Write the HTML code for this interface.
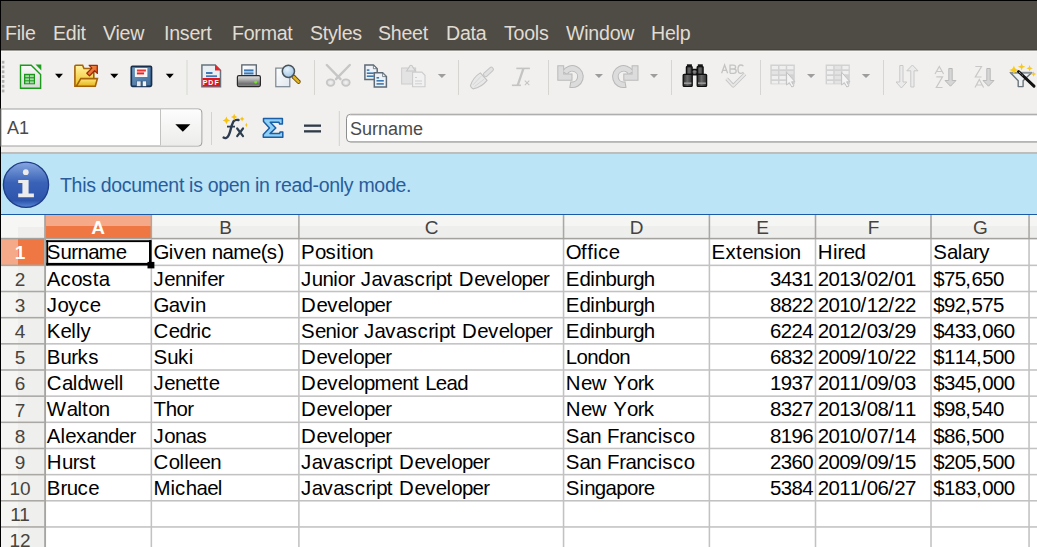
<!DOCTYPE html>
<html><head><meta charset="utf-8">
<style>
*{box-sizing:border-box;margin:0;padding:0}
html,body{width:1037px;height:547px;overflow:hidden;background:#000;font-family:"Liberation Sans",sans-serif}
.abs{position:absolute}
#menubar{position:absolute;left:1px;top:1px;width:1036px;height:50px;background:linear-gradient(#4f4c46 0,#4f4c46 48px,#46433d 48px,#46433d 49px,#9e9c97 49px)}
.mi{position:absolute;top:20.1px;font-size:19.6px;letter-spacing:-0.25px;color:#e0dcd3;white-space:pre;line-height:24px}
#tb{position:absolute;left:1px;top:51px;width:1036px;height:102px;background:linear-gradient(#f6f5f3 0,#f6f5f3 1px,#f1f0ee 1px)}
#info{position:absolute;left:1px;top:153px;width:1036px;height:62px;background:#bbe4f6;border-bottom:1px solid #1a5aa6}
#grid{position:absolute;left:0;top:0;width:1037px;height:547px}
.hl{position:absolute;height:1px;background:#cdcdcd}
.vl{position:absolute;width:1px;background:#cdcdcd}
.ch{position:absolute;top:0;height:24px;font-size:19px;color:#46433e;text-align:center;line-height:24px}
.rh{position:absolute;left:0;width:43px;font-size:19px;color:#46433e;text-align:center}
.c{position:absolute;font-size:20.43px;color:#000;white-space:pre;line-height:24px}
.c i{display:inline-block;font-style:normal}
.r{text-align:right}
.n{font-size:20px;letter-spacing:-0.1px}
.sep{position:absolute;width:1px;background:#d3d2cf}
.dd{position:absolute;width:0;height:0;border-left:4px solid transparent;border-right:4px solid transparent;border-top:4px solid #000}
.ddg{border-top-color:#9a9a9a}
</style></head><body>
<div id="menubar">
<span class="mi" style="left:4px">File</span>
<span class="mi" style="left:52px">Edit</span>
<span class="mi" style="left:102px">View</span>
<span class="mi" style="left:163px">Insert</span>
<span class="mi" style="left:231px">Format</span>
<span class="mi" style="left:309px">Styles</span>
<span class="mi" style="left:377px">Sheet</span>
<span class="mi" style="left:445px">Data</span>
<span class="mi" style="left:503px">Tools</span>
<span class="mi" style="left:565px">Window</span>
<span class="mi" style="left:650px">Help</span>
</div>
<div id="tb"></div>

<div id="info">
 <span class="abs" style="left:59px;top:21px;font-size:19.5px;letter-spacing:-0.3px;color:#2a5c9c;white-space:pre">This document is open in read-only mode.</span>
</div>
<!--TB-->
<svg class="abs" style="left:0;top:0" width="1037" height="215" viewBox="0 0 1037 215">
<defs>
 <linearGradient id="gdoc" x1="0" y1="0" x2="0" y2="1"><stop offset="0" stop-color="#fafafa"/><stop offset="1" stop-color="#d9d9d9"/></linearGradient>
 <linearGradient id="gfold" x1="0" y1="0" x2="0" y2="1"><stop offset="0" stop-color="#fff3a0"/><stop offset="1" stop-color="#f0c020"/></linearGradient>
 <linearGradient id="gfront" x1="0" y1="0" x2="0" y2="1"><stop offset="0" stop-color="#fde77a"/><stop offset="1" stop-color="#e6b31a"/></linearGradient>
 <linearGradient id="garrow" x1="0" y1="0" x2="1" y2="1"><stop offset="0" stop-color="#f7a25a"/><stop offset="1" stop-color="#e0501a"/></linearGradient>
 <linearGradient id="gsave" x1="0" y1="0" x2="1" y2="1"><stop offset="0" stop-color="#6f98c0"/><stop offset="1" stop-color="#3f6c9a"/></linearGradient>
 <linearGradient id="gprn" x1="0" y1="0" x2="0" y2="1"><stop offset="0" stop-color="#e6e6e6"/><stop offset="0.35" stop-color="#b4b4b4"/><stop offset="0.75" stop-color="#707070"/><stop offset="1" stop-color="#8a8a8a"/></linearGradient>
 <linearGradient id="gpage" x1="0" y1="0" x2="1" y2="1"><stop offset="0" stop-color="#ffffff"/><stop offset="1" stop-color="#dfe6ee"/></linearGradient>
 <radialGradient id="glens" cx="0.4" cy="0.35" r="0.7"><stop offset="0" stop-color="#e6f2fb"/><stop offset="1" stop-color="#9cc3e6"/></radialGradient>
 <linearGradient id="gbtn" x1="0" y1="0" x2="0" y2="1"><stop offset="0" stop-color="#fdfdfd"/><stop offset="1" stop-color="#ececeb"/></linearGradient>
 <linearGradient id="ginfo" x1="0" y1="0" x2="0" y2="1"><stop offset="0" stop-color="#86a6e0"/><stop offset="0.45" stop-color="#3a63b8"/><stop offset="0.85" stop-color="#2c55ab"/><stop offset="1" stop-color="#5a88d8"/></linearGradient>
</defs>
<!-- grip -->
<g fill="#b0afac"><rect x="1.8" y="60.8" width="2.6" height="2.8"/><rect x="1.8" y="65.6" width="2.6" height="2.8"/><rect x="1.8" y="70.4" width="2.6" height="2.8"/><rect x="1.8" y="75.2" width="2.6" height="2.8"/><rect x="1.8" y="80.0" width="2.6" height="2.8"/><rect x="1.8" y="84.8" width="2.6" height="2.8"/><rect x="1.8" y="89.6" width="2.6" height="2.8"/></g>
<!-- new spreadsheet -->
<path d="M20.5 65.2 H31.2 L40.6 74.6 V88.2 H20.5 Z" fill="url(#gdoc)" stroke="#1c9a1c" stroke-width="1.4"/>
<path d="M35.5 64.5 H41.3 V70.5 Z" fill="#1ea01e"/>
<rect x="24" y="73.8" width="11" height="10.5" fill="#1b961b"/>
<g fill="#a6dca6"><rect x="25.3" y="75.2" width="3.8" height="2"/><rect x="30" y="75.2" width="3.8" height="2"/><rect x="25.3" y="78.3" width="3.8" height="2"/><rect x="30" y="78.3" width="3.8" height="2"/><rect x="25.3" y="81.3" width="3.8" height="2"/><rect x="30" y="81.3" width="3.8" height="2"/></g>
<!-- dropdown arrows -->
<g fill="#000">
 <path d="M55 73.8 H63 L59 78.2 Z"/><path d="M110.2 73.8 H118.4 L114.3 78.2 Z"/><path d="M165.8 73.8 H173.8 L169.8 78.2 Z"/>
</g>
<!-- open folder -->
<path d="M74.9 86.2 V66.3 Q74.9 65.3 75.9 65.3 H82.6 L84 68.5 H93.8 V86.2 Z" fill="url(#gfold)" stroke="#a4620a" stroke-width="1.6"/>
<path d="M80.8 78.6 H97.4 L95.3 86.3 H76.3 Z" fill="url(#gfront)" stroke="#a4620a" stroke-width="1.6"/>
<path d="M89.2 65.3 H97.3 V73.4 L94.6 70.8 L89.5 75.9 L86.8 73.2 L91.9 68.1 Z" fill="url(#garrow)" stroke="#a0280a" stroke-width="1.3" stroke-linejoin="round"/>
<!-- save -->
<rect x="131.3" y="66.4" width="20.2" height="19.9" rx="1.2" fill="url(#gsave)" stroke="#172f4c" stroke-width="1.7"/>
<rect x="134.9" y="68" width="12.5" height="9" fill="#f6f6f6"/>
<rect x="136.9" y="69.5" width="9" height="2" fill="#e33"/><rect x="136.9" y="72.4" width="7.2" height="2" fill="#e22"/>
<rect x="136.2" y="80.8" width="10.5" height="5.5" fill="#3c5f86"/>
<rect x="136.9" y="81.3" width="3.7" height="4.8" fill="#e8e8e8"/><rect x="142.8" y="81.3" width="3.3" height="4.8" fill="#f2f2f2"/>
<!-- separators -->
<g fill="#d6d5d2">
 <rect x="186.5" y="60" width="1" height="35"/><rect x="314" y="60" width="1" height="35"/><rect x="458" y="60" width="1" height="35"/><rect x="548" y="60" width="1" height="35"/><rect x="671" y="60" width="1" height="35"/><rect x="760" y="60" width="1" height="35"/><rect x="883" y="60" width="1" height="35"/>
</g>
<!-- pdf -->
<path d="M201.9 65 H215.2 L220.5 70.3 V86.7 H201.9 Z" fill="#e9eef3" stroke="#66737e" stroke-width="1.5"/>
<path d="M215 64.6 L220.9 70.5 H215 Z" fill="#e8242a"/>
<rect x="206" y="72" width="6.5" height="2" fill="#3f78b4"/><rect x="206" y="75.3" width="11" height="1.8" fill="#3f78b4"/>
<rect x="202.5" y="78" width="17.5" height="8.3" fill="#e0161e"/>
<text x="211.2" y="85" font-family="Liberation Sans" font-weight="bold" font-size="7" fill="#fff" text-anchor="middle" letter-spacing="1">PDF</text>
<!-- printer -->
<rect x="241.8" y="64.9" width="14.5" height="13" fill="url(#gpage)" stroke="#56606a" stroke-width="1.3"/>
<rect x="244" y="69.4" width="9.5" height="2" fill="#3878b8"/><rect x="244" y="72.4" width="9.5" height="2" fill="#3878b8"/>
<rect x="237.4" y="75.6" width="23" height="11" rx="1.5" fill="url(#gprn)" stroke="#2a2a2a" stroke-width="1.2"/>
<circle cx="255.7" cy="82" r="1.5" fill="#6fe82a"/>
<!-- print preview -->
<rect x="275.8" y="68.1" width="14" height="18.6" fill="url(#gpage)" stroke="#7a8691" stroke-width="1.2"/>
<line x1="293.6" y1="76.8" x2="298.6" y2="81.8" stroke="#6a4a08" stroke-width="4.2" stroke-linecap="round"/>
<line x1="293.6" y1="76.8" x2="298.6" y2="81.8" stroke="#e2b424" stroke-width="2.4" stroke-linecap="round"/>
<circle cx="288.4" cy="71.3" r="6.1" fill="url(#glens)" stroke="#4a5259" stroke-width="1.5"/>
<!-- scissors disabled -->
<g stroke="#c6c6c6" fill="none" stroke-width="2.4" stroke-linecap="round">
 <line x1="326.8" y1="65" x2="340.5" y2="79.2"/><line x1="349.8" y1="65" x2="336" y2="79.2"/>
</g>
<g stroke="#c6c6c6" fill="#e4e4e4" stroke-width="1.8">
 <ellipse cx="330.6" cy="82.6" rx="3.8" ry="3.3"/><ellipse cx="345.9" cy="82.6" rx="3.8" ry="3.3"/>
</g>
<g fill="#f1f0ee"><circle cx="330.6" cy="82.6" r="1.3"/><circle cx="345.9" cy="82.6" r="1.3"/></g>
<!-- copy -->
<path d="M364.9 64.9 H373.4 L377.2 68.7 V79.5 H364.9 Z" fill="#eef2f6" stroke="#5e6a75" stroke-width="1.5"/><path d="M373.4 65.2 V68.7 H376.9 Z" fill="#fff" stroke="#5e6a75" stroke-width="0.8"/>
<rect x="366.8" y="69.3" width="2.6" height="1.6" fill="#3a78b5"/><rect x="366.8" y="72.4" width="7" height="1.6" fill="#3a78b5"/><rect x="366.8" y="75.4" width="7" height="1.6" fill="#3a78b5"/>
<path d="M374.3 72.8 H382.6 L386.4 76.6 V87 H374.3 Z" fill="#eef2f6" stroke="#5e6a75" stroke-width="1.5"/><path d="M382.6 73.1 V76.6 H386.1 Z" fill="#fff" stroke="#5e6a75" stroke-width="0.8"/>
<rect x="376.5" y="77" width="2.6" height="1.6" fill="#3a78b5"/><rect x="376.5" y="80" width="7.3" height="1.6" fill="#3a78b5"/><rect x="376.5" y="83.1" width="7.3" height="1.6" fill="#3a78b5"/>
<!-- paste disabled -->
<rect x="401.6" y="68" width="14" height="16" fill="#e3e3e3" stroke="#cfcfcf" stroke-width="1.1"/>
<path d="M406.5 71 L409 67.6 Q409.5 65.2 411 65.2 Q412.5 65.2 413 67.6 L415.5 71 Z" fill="#e6e6e6" stroke="#c6c6c6" stroke-width="1.1"/>
<path d="M412.6 72.1 H421.8 L425 75.3 V86.8 H412.6 Z" fill="#f1f1f1" stroke="#cccccc" stroke-width="1.1"/>
<g fill="#cfcfcf"><rect x="415" y="77" width="2" height="1"/><rect x="415" y="80.5" width="7" height="1"/><rect x="415" y="83.3" width="7" height="1"/></g>
<path d="M437.8 74.1 H446 L441.9 78 Z" fill="#9d9d9d"/>
<!-- clone brush disabled -->
<g transform="rotate(-42 481 79)">
 <rect x="485.5" y="76.6" width="11.5" height="4.2" rx="1.6" fill="#e2e2e2" stroke="#c4c4c4" stroke-width="1"/>
 <path d="M484.6 74 V84 Q476 85.5 468.5 81 Q467.8 79 468.5 77 Q476 72.5 484.6 74 Z" fill="#e8e8e8" stroke="#c2c2c2" stroke-width="1.1"/>
 <g stroke="#d2d2d2" stroke-width="0.8"><line x1="471" y1="78" x2="483" y2="77"/><line x1="471" y1="80.3" x2="483" y2="81.2"/></g>
</g>
<!-- clear formatting -->
<g fill="#c4c4c4">
 <rect x="516.3" y="67.6" width="13.6" height="1.6"/><rect x="511.9" y="84.5" width="9" height="1.6"/>
 <path d="M522.2 68.6 H524.6 L519 85 H516.6 Z"/>
</g>
<g stroke="#c4c4c4" stroke-width="1.1"><line x1="524.8" y1="80.6" x2="529.3" y2="85.1"/><line x1="529.3" y1="80.6" x2="524.8" y2="85.1"/></g>
<!-- undo -->
<g>
<path d="M563.11 71.35 A10.5 10.5 0 1 1 570.38 86.94 L571.18 82.41 A5.9 5.9 0 1 0 567.09 73.65 Z" fill="none" stroke="#b9b9b9" stroke-width="2"/>
<path d="M558.3 66.3 H563.2 V74.6 H571.5 V79.8 H558.3 Z" fill="none" stroke="#b9b9b9" stroke-width="2"/>
<path d="M563.11 71.35 A10.5 10.5 0 1 1 570.38 86.94 L571.18 82.41 A5.9 5.9 0 1 0 567.09 73.65 Z" fill="#dcdcdc"/>
<path d="M558.3 66.3 H563.2 V74.6 H571.5 V79.8 H558.3 Z" fill="#dcdcdc"/>
</g>
<path d="M594.9 73.9 H603 L598.9 78 Z" fill="#9d9d9d"/>
<!-- redo -->
<g transform="translate(1195.8,0) scale(-1,1)">
<g>
<path d="M563.11 71.35 A10.5 10.5 0 1 1 570.38 86.94 L571.18 82.41 A5.9 5.9 0 1 0 567.09 73.65 Z" fill="none" stroke="#b9b9b9" stroke-width="2"/>
<path d="M558.3 66.3 H563.2 V74.6 H571.5 V79.8 H558.3 Z" fill="none" stroke="#b9b9b9" stroke-width="2"/>
<path d="M563.11 71.35 A10.5 10.5 0 1 1 570.38 86.94 L571.18 82.41 A5.9 5.9 0 1 0 567.09 73.65 Z" fill="#dcdcdc"/>
<path d="M558.3 66.3 H563.2 V74.6 H571.5 V79.8 H558.3 Z" fill="#dcdcdc"/>
</g>
</g>
<path d="M650 73.9 H658 L654 78 Z" fill="#9d9d9d"/>
<!-- binoculars -->
<defs><linearGradient id="gbin" x1="0" y1="0" x2="1" y2="0"><stop offset="0" stop-color="#2a2a2a"/><stop offset="0.45" stop-color="#6a6a6a"/><stop offset="1" stop-color="#333"/></linearGradient></defs>
<g stroke="#0e0e0e" stroke-width="1.3" fill="url(#gbin)">
 <rect x="692" y="69.4" width="5.2" height="5.4"/>
 <rect x="686.4" y="66.6" width="5.7" height="7.8" rx="0.6"/><rect x="697.2" y="66.6" width="5.9" height="7.8" rx="0.6"/>
 <rect x="683.2" y="74.3" width="9" height="12.1" rx="1"/><rect x="697.2" y="74.3" width="9.4" height="12.1" rx="1"/>
</g>
<g fill="#151515"><rect x="686.9" y="64.3" width="5" height="2.8"/><rect x="697.8" y="64.3" width="5" height="2.8"/></g>
<g fill="#9a9a9a"><rect x="684" y="82.4" width="7.4" height="1.6"/><rect x="698" y="82.4" width="7.8" height="1.6"/><rect x="692.6" y="71.4" width="4" height="1"/></g>
<!-- spellcheck disabled -->
<g fill="none" stroke="#c4c4c4" stroke-width="1.3">
 <path d="M721.6 73.3 L724.6 65 L727.6 73.3 M722.8 70.4 H726.4"/>
 <path d="M730 73.3 V65.1 H733.4 Q735.6 65.1 735.6 67.1 Q735.6 69 733.4 69 H730 M733.4 69 Q736.2 69 736.2 71.1 Q736.2 73.3 733.6 73.3 H730"/>
 <path d="M743.4 66.2 Q742.4 65 740.8 65 Q738 65 738 69.2 Q738 73.4 740.8 73.4 Q742.4 73.4 743.4 72.2"/>
</g>
<path d="M726.6 78.7 L733.2 85.8 L745 74" fill="none" stroke="#c6c6c6" stroke-width="3.6" stroke-linejoin="round"/>
<path d="M726.6 78.7 L733.2 85.8 L745 74" fill="none" stroke="#e8e8e8" stroke-width="1.8" stroke-linejoin="round"/>
<!-- table icons disabled -->
<g>
 <rect x="770.3" y="64.5" width="24.5" height="19.8" fill="#d2d2d2"/>
 <g fill="#efefef">
  <rect x="771.8" y="66" width="6.2" height="3.3"/><rect x="779.5" y="66" width="6.2" height="3.3"/><rect x="787.2" y="66" width="6.2" height="3.3"/>
  <rect x="771.8" y="71" width="6.2" height="3.3" fill="#e3e3e3"/><rect x="779.5" y="71" width="6.2" height="3.3" fill="#e3e3e3"/><rect x="787.2" y="71" width="6.2" height="3.3" fill="#e3e3e3"/>
  <rect x="771.8" y="76" width="6.2" height="3.3"/><rect x="779.5" y="76" width="6.2" height="3.3"/>
  <rect x="771.8" y="81" width="6.2" height="2.5"/><rect x="779.5" y="81" width="6.2" height="2.5"/>
 </g>
 <path d="M786.6 72.3 V85 L789.3 82.6 L791.8 87 L794 86 L791.6 81.8 H795 Z" fill="#f4f4f4" stroke="#c2c2c2" stroke-width="1"/>
</g>
<path d="M807 74 H815.2 L811.1 78 Z" fill="#9d9d9d"/>
<g>
 <rect x="825.6" y="64.5" width="24.2" height="19.8" fill="#d2d2d2"/>
 <g fill="#efefef">
  <rect x="827" y="66" width="6.2" height="3.3"/><rect x="834.7" y="66" width="6.2" height="3.3" fill="#e3e3e3"/><rect x="842.4" y="66" width="6.2" height="3.3"/>
  <rect x="827" y="71" width="6.2" height="3.3"/><rect x="834.7" y="71" width="6.2" height="3.3" fill="#e3e3e3"/><rect x="842.4" y="71" width="6.2" height="3.3"/>
  <rect x="827" y="76" width="6.2" height="3.3"/><rect x="834.7" y="76" width="6.2" height="3.3" fill="#e3e3e3"/>
  <rect x="827" y="81" width="6.2" height="2.5"/><rect x="834.7" y="81" width="6.2" height="2.5" fill="#e3e3e3"/>
 </g>
 <path d="M841.6 72.3 V85 L844.3 82.6 L846.8 87 L849 86 L846.6 81.8 H850 Z" fill="#f4f4f4" stroke="#c2c2c2" stroke-width="1"/>
</g>
<path d="M861.8 74 H870.2 L866 78 Z" fill="#9d9d9d"/>
<!-- sort disabled -->
<g fill="#ebebeb" stroke="#c8c8c8" stroke-width="1">
 <path d="M899.8 65.5 H903 V82 H906.8 L901.4 88 L896 82 H899.8 Z"/>
 <path d="M910.8 87 H914 V70.8 H918 L912.4 65 L906.8 70.8 H910.8 Z"/>
</g>
<g fill="#d6d6d6" stroke="#b9b9b9" stroke-width="1">
 <path d="M948.8 68.5 H952.2 V80.5 H956 L950.5 86.2 L945 80.5 H948.8 Z"/>
 <path d="M986.8 68.5 H990.2 V80.5 H994 L988.5 86.2 L983 80.5 H986.8 Z"/>
</g>
<g fill="none" stroke="#c8c8c8" stroke-width="1.2">
 <path d="M935 74 L939.3 66.5 L943.6 74 M936.5 71.5 H942"/>
 <path d="M936.3 76.8 H942.5 L936.3 87.5 H942.5"/>
 <path d="M975.3 66.5 H981.5 L975.3 77 H981.5"/>
 <path d="M975 87.5 L979.3 79.5 L983.6 87.5 M976.5 85 H982"/>
</g>
<!-- autofilter -->
<path d="M1010.3 72.6 H1031.8 L1023.1 80.8 V86.6 H1018.2 V80.8 Z" fill="#eef1f4" stroke="#6d757c" stroke-width="1.4" stroke-linejoin="round"/>
<rect x="1010.3" y="71.8" width="21.5" height="1.8" fill="#8a9298"/>
<line x1="1018.5" y1="71.5" x2="1034" y2="86.2" stroke="#111" stroke-width="3" stroke-linecap="round"/>
<line x1="1019" y1="72" x2="1022.5" y2="75.2" stroke="#ddd" stroke-width="1" stroke-dasharray="1 1"/>
<g fill="#f8c81a">
 <circle cx="1013.9" cy="70" r="2.2" fill="#fbd94a"/>
 <path d="M1013.9 65.4 L1015.1 68.8 L1018.5 70 L1015.1 71.2 L1013.9 74.6 L1012.6999999999999 71.2 L1009.3 70 L1012.6999999999999 68.8 Z"/>
 <path d="M1021.6 63.0 L1022.6 65.8 L1025.4 66.8 L1022.6 67.8 L1021.6 70.6 L1020.6 67.8 L1017.8000000000001 66.8 L1020.6 65.8 Z"/>
 <path d="M1029.6 65.1 L1030.5 67.39999999999999 L1032.8 68.3 L1030.5 69.2 L1029.6 71.5 L1028.6999999999998 69.2 L1026.3999999999999 68.3 L1028.6999999999998 67.39999999999999 Z"/>
 <path d="M1033.6 71.2 L1034.3999999999999 73.2 L1036.3999999999999 74 L1034.3999999999999 74.8 L1033.6 76.8 L1032.8 74.8 L1030.8 74 L1032.8 73.2 Z"/>
</g>
<!-- name box -->
<path d="M1 109 H197.8 Q201.8 109 201.8 113 V142 Q201.8 146 197.8 146 H1 Z" fill="#fff" stroke="#9f9f9d" stroke-width="1.1"/>
<path d="M160.5 109.6 H197.8 Q201.2 109.6 201.2 113 V142 Q201.2 145.4 197.8 145.4 H160.5 Z" fill="url(#gbtn)"/>
<line x1="160.5" y1="109" x2="160.5" y2="145.3" stroke="#c2c2c0" stroke-width="1"/>
<path d="M175.3 124.3 H190.4 L182.85 131.8 Z" fill="#000"/>
<text x="7" y="133.5" font-family="Liberation Sans" font-size="18" fill="#4a4a4a">A1</text>
<rect x="211" y="112" width="1" height="33" fill="#d3d2cf"/>
<rect x="338.8" y="111" width="1" height="35" fill="#d3d2cf"/>
<!-- fx -->
<path d="M238.5 120 Q235 119.3 233.4 121.5 Q232 124 230.5 130 Q229 136.5 226.5 137.8 Q225 138.6 223.6 137.6" fill="none" stroke="#2d3d4f" stroke-width="2.4" stroke-linecap="round"/>
<line x1="227" y1="126.6" x2="235" y2="126.6" stroke="#2d3d4f" stroke-width="1.8"/>
<g stroke="#2d3d4f" stroke-width="2.2" stroke-linecap="round"><line x1="237.2" y1="128.5" x2="243" y2="136.2"/><line x1="243" y1="128.5" x2="237.2" y2="136.2"/></g>
<g fill="#f6c214">
 <path d="M226.4 116.6 L227.6 119.2 L230.2 120.4 L227.6 121.6 L226.4 124.2 L225.2 121.6 L222.6 120.4 L225.2 119.2 Z"/>
 <path d="M234.2 113.8 L235.2 116.1 L237.5 117.1 L235.2 118.1 L234.2 120.4 L233.2 118.1 L230.9 117.1 L233.2 116.1 Z"/>
 <path d="M242.1 116.4 L242.9 118.1 L244.6 118.9 L242.9 119.7 L242.1 121.4 L241.3 119.7 L239.6 118.9 L241.3 118.1 Z"/>
 <path d="M246.4 122.5 L247 124.4 L247.6 125 L247 125.6 L246.4 127.5 L245.8 125.6 L244.8 125 L245.8 124.4 Z"/>
</g>
<!-- sigma -->
<path d="M263.5 118.6 H282.4 V124 H279.6 L279 122.3 H270.2 L275.8 128 L270 133.6 H279.5 L280.2 131.9 H282.8 V137.3 H263.3 V134.6 L269.5 128 L263.5 121.4 Z" fill="#8fd0f4" stroke="#1a5ea6" stroke-width="1.5" stroke-linejoin="round"/>
<!-- equals -->
<rect x="304" y="124.5" width="17" height="2.3" fill="#2f3b47"/><rect x="304" y="130.2" width="17" height="2.3" fill="#2f3b47"/>
<!-- input field -->
<path d="M1040 114.3 H350.5 Q346.5 114.3 346.5 118.3 V138 Q346.5 142 350.5 142 H1040" fill="#fff" stroke="#8e8e8e" stroke-width="1"/>
<line x1="350" y1="115.3" x2="1037" y2="115.3" stroke="#dcdcdc" stroke-width="1"/>
<line x1="350" y1="141.5" x2="1037" y2="141.5" stroke="#b5b5b5" stroke-width="1"/>
<text x="350" y="135" font-family="Liberation Sans" font-size="18" fill="#4a4a4a">Surname</text>
<rect x="1" y="152.2" width="1036" height="1.5" fill="#b2b1ae"/>
<!-- info icon -->
<circle cx="26" cy="184.7" r="22.6" fill="url(#ginfo)" stroke="#1f3d88" stroke-width="1.3"/>
<circle cx="25.8" cy="172.2" r="2.9" fill="#ececec"/>
<path d="M18.2 180 H28.6 V193.5 H33.9 V197.2 H18.2 V193.5 H22.4 V183.1 H18.2 Z" fill="#ececec"/>
</svg>

<!--/TB-->

<!--GRID-->
<div class="abs" style="left:1px;top:215px;width:1036px;height:332px;background:#fff"></div>
<div class="abs" style="left:1px;top:215px;width:1036px;height:23px;background:linear-gradient(#f5f5f3 0,#f5f5f3 50%,#eeeeec 50%,#eeeeec 100%)"></div>
<div class="abs" style="left:1px;top:215px;width:43px;height:23px;background:#f6f6f5"></div>
<div class="abs" style="left:18px;top:227px;width:26px;height:11px;background:#efeeec"></div>
<div class="abs" style="left:1px;top:239px;width:43px;height:308px;background:linear-gradient(90deg,#f5f5f3 0,#f5f5f3 40%,#efefed 40%,#efefed 100%)"></div>
<div class="abs" style="left:45px;top:215px;width:106px;height:23px;background:linear-gradient(#f6a988 0,#f6a988 50%,#ee7743 50%,#ee7743 100%)"></div>
<div class="abs" style="left:1px;top:239px;width:43px;height:26px;background:linear-gradient(90deg,#f6a988 0,#f6a988 40%,#ee7743 40%,#ee7743 100%)"></div>
<svg class="abs" style="left:0;top:0" width="1037" height="547" viewBox="0 0 1037 547">
<rect x="150.57" y="239" width="1.55" height="308" fill="#c2c2c2"/>
<rect x="150.57" y="215" width="1.55" height="24" fill="#a9a8a5"/>
<rect x="298.12" y="239" width="1.55" height="308" fill="#c2c2c2"/>
<rect x="298.12" y="215" width="1.55" height="24" fill="#a9a8a5"/>
<rect x="562.77" y="239" width="1.55" height="308" fill="#c2c2c2"/>
<rect x="562.77" y="215" width="1.55" height="24" fill="#a9a8a5"/>
<rect x="708.62" y="239" width="1.55" height="308" fill="#c2c2c2"/>
<rect x="708.62" y="215" width="1.55" height="24" fill="#a9a8a5"/>
<rect x="814.73" y="239" width="1.55" height="308" fill="#c2c2c2"/>
<rect x="814.73" y="215" width="1.55" height="24" fill="#a9a8a5"/>
<rect x="930.23" y="239" width="1.55" height="308" fill="#c2c2c2"/>
<rect x="930.23" y="215" width="1.55" height="24" fill="#a9a8a5"/>
<rect x="1028.27" y="239" width="1.55" height="308" fill="#c2c2c2"/>
<rect x="1028.27" y="215" width="1.55" height="24" fill="#a9a8a5"/>
<rect x="45" y="264.58" width="992" height="1.55" fill="#c2c2c2"/>
<rect x="1" y="264.58" width="43.8" height="1.55" fill="#a9a8a5"/>
<rect x="45" y="290.74" width="992" height="1.55" fill="#c2c2c2"/>
<rect x="1" y="290.74" width="43.8" height="1.55" fill="#a9a8a5"/>
<rect x="45" y="316.90" width="992" height="1.55" fill="#c2c2c2"/>
<rect x="1" y="316.90" width="43.8" height="1.55" fill="#a9a8a5"/>
<rect x="45" y="343.06" width="992" height="1.55" fill="#c2c2c2"/>
<rect x="1" y="343.06" width="43.8" height="1.55" fill="#a9a8a5"/>
<rect x="45" y="369.22" width="992" height="1.55" fill="#c2c2c2"/>
<rect x="1" y="369.22" width="43.8" height="1.55" fill="#a9a8a5"/>
<rect x="45" y="395.38" width="992" height="1.55" fill="#c2c2c2"/>
<rect x="1" y="395.38" width="43.8" height="1.55" fill="#a9a8a5"/>
<rect x="45" y="421.54" width="992" height="1.55" fill="#c2c2c2"/>
<rect x="1" y="421.54" width="43.8" height="1.55" fill="#a9a8a5"/>
<rect x="45" y="447.70" width="992" height="1.55" fill="#c2c2c2"/>
<rect x="1" y="447.70" width="43.8" height="1.55" fill="#a9a8a5"/>
<rect x="45" y="473.86" width="992" height="1.55" fill="#c2c2c2"/>
<rect x="1" y="473.86" width="43.8" height="1.55" fill="#a9a8a5"/>
<rect x="45" y="500.02" width="992" height="1.55" fill="#c2c2c2"/>
<rect x="1" y="500.02" width="43.8" height="1.55" fill="#a9a8a5"/>
<rect x="45" y="526.18" width="992" height="1.55" fill="#c2c2c2"/>
<rect x="1" y="526.18" width="43.8" height="1.55" fill="#a9a8a5"/>
<rect x="44.15" y="215" width="1.9" height="332" fill="#a6a5a2"/>
<rect x="1" y="237.82" width="1036" height="1.55" fill="#a3a29f"/>
</svg>
<div class="ch" style="left:45px;width:106px;top:216px;color:#fff;font-weight:bold">A</div>
<div class="ch" style="left:152px;width:147px;top:216px;color:#46433e">B</div>
<div class="ch" style="left:300px;width:263px;top:216px;color:#46433e">C</div>
<div class="ch" style="left:564px;width:145px;top:216px;color:#46433e">D</div>
<div class="ch" style="left:710px;width:105px;top:216px;color:#46433e">E</div>
<div class="ch" style="left:816px;width:115px;top:216px;color:#46433e">F</div>
<div class="ch" style="left:932px;width:97px;top:216px;color:#46433e">G</div>
<div class="ch" style="left:1030px;width:60px;top:216px">H</div>
<div class="rh" style="left:0px;width:40px;top:240.10px;height:26px;line-height:26px;color:#fff;font-weight:bold">1</div>
<div class="rh" style="left:0px;width:40px;top:266.85px;height:26px;line-height:26px;color:#46433e">2</div>
<div class="rh" style="left:0px;width:40px;top:293.01px;height:26px;line-height:26px;color:#46433e">3</div>
<div class="rh" style="left:0px;width:40px;top:319.17px;height:26px;line-height:26px;color:#46433e">4</div>
<div class="rh" style="left:0px;width:40px;top:345.33px;height:26px;line-height:26px;color:#46433e">5</div>
<div class="rh" style="left:0px;width:40px;top:371.49px;height:26px;line-height:26px;color:#46433e">6</div>
<div class="rh" style="left:0px;width:40px;top:397.65px;height:26px;line-height:26px;color:#46433e">7</div>
<div class="rh" style="left:0px;width:40px;top:423.81px;height:26px;line-height:26px;color:#46433e">8</div>
<div class="rh" style="left:0px;width:40px;top:449.97px;height:26px;line-height:26px;color:#46433e">9</div>
<div class="rh" style="left:0px;width:40px;top:476.13px;height:26px;line-height:26px;color:#46433e">10</div>
<div class="rh" style="left:0px;width:40px;top:502.29px;height:26px;line-height:26px;color:#46433e">11</div>
<div class="rh" style="left:0px;width:40px;top:528.45px;height:26px;line-height:26px;color:#46433e">12</div>
<div class="c" style="left:46.80px;top:239.80px"><i style="width:13.788px">S</i><i style="width:10.724px">u</i><i style="width:6.128px">r</i><i style="width:10.724px">n</i><i style="width:10.724px">a</i><i style="width:16.852px">m</i><i style="width:10.724px">e</i></div>
<div class="c" style="left:153.55px;top:239.80px"><i style="width:15.320px">G</i><i style="width:4.596px">i</i><i style="width:10.724px">v</i><i style="width:10.724px">e</i><i style="width:10.724px">n</i><i style="width:6.128px">&nbsp;</i><i style="width:10.724px">n</i><i style="width:10.724px">a</i><i style="width:16.852px">m</i><i style="width:10.724px">e</i><i style="width:6.128px">(</i><i style="width:10.724px">s</i><i style="width:6.128px">)</i></div>
<div class="c" style="left:301.10px;top:239.80px"><i style="width:13.788px">P</i><i style="width:10.724px">o</i><i style="width:10.724px">s</i><i style="width:4.596px">i</i><i style="width:6.128px">t</i><i style="width:4.596px">i</i><i style="width:10.724px">o</i><i style="width:10.724px">n</i></div>
<div class="c" style="left:565.75px;top:239.80px"><i style="width:15.320px">O</i><i style="width:6.128px">f</i><i style="width:6.128px">f</i><i style="width:4.596px">i</i><i style="width:10.724px">c</i><i style="width:10.724px">e</i></div>
<div class="c" style="left:711.60px;top:239.80px"><i style="width:13.788px">E</i><i style="width:10.724px">x</i><i style="width:6.128px">t</i><i style="width:10.724px">e</i><i style="width:10.724px">n</i><i style="width:10.724px">s</i><i style="width:4.596px">i</i><i style="width:10.724px">o</i><i style="width:10.724px">n</i></div>
<div class="c" style="left:817.70px;top:239.80px"><i style="width:15.320px">H</i><i style="width:4.596px">i</i><i style="width:6.128px">r</i><i style="width:10.724px">e</i><i style="width:10.724px">d</i></div>
<div class="c" style="left:933.20px;top:239.80px"><i style="width:13.788px">S</i><i style="width:10.724px">a</i><i style="width:4.596px">l</i><i style="width:10.724px">a</i><i style="width:6.128px">r</i><i style="width:10.724px">y</i></div>
<div class="c" style="left:46.80px;top:266.55px"><i style="width:13.788px">A</i><i style="width:10.724px">c</i><i style="width:10.724px">o</i><i style="width:10.724px">s</i><i style="width:6.128px">t</i><i style="width:10.724px">a</i></div>
<div class="c" style="left:153.55px;top:266.55px"><i style="width:10.724px">J</i><i style="width:10.724px">e</i><i style="width:10.724px">n</i><i style="width:10.724px">n</i><i style="width:4.596px">i</i><i style="width:6.128px">f</i><i style="width:10.724px">e</i><i style="width:6.128px">r</i></div>
<div class="c" style="left:301.10px;top:266.55px"><i style="width:10.724px">J</i><i style="width:10.724px">u</i><i style="width:10.724px">n</i><i style="width:4.596px">i</i><i style="width:10.724px">o</i><i style="width:6.128px">r</i><i style="width:6.128px">&nbsp;</i><i style="width:10.724px">J</i><i style="width:10.724px">a</i><i style="width:10.724px">v</i><i style="width:10.724px">a</i><i style="width:10.724px">s</i><i style="width:10.724px">c</i><i style="width:6.128px">r</i><i style="width:4.596px">i</i><i style="width:10.724px">p</i><i style="width:6.128px">t</i><i style="width:6.128px">&nbsp;</i><i style="width:15.320px">D</i><i style="width:10.724px">e</i><i style="width:10.724px">v</i><i style="width:10.724px">e</i><i style="width:4.596px">l</i><i style="width:10.724px">o</i><i style="width:10.724px">p</i><i style="width:10.724px">e</i><i style="width:6.128px">r</i></div>
<div class="c" style="left:565.75px;top:266.55px"><i style="width:13.788px">E</i><i style="width:10.724px">d</i><i style="width:4.596px">i</i><i style="width:10.724px">n</i><i style="width:10.724px">b</i><i style="width:10.724px">u</i><i style="width:6.128px">r</i><i style="width:10.724px">g</i><i style="width:10.724px">h</i></div>
<div class="c" style="left:770.00px;top:266.55px"><i style="width:10.724px">3</i><i style="width:10.724px">4</i><i style="width:10.724px">3</i><i style="width:10.724px">1</i></div>
<div class="c" style="left:817.70px;top:266.55px"><i style="width:10.724px">2</i><i style="width:10.724px">0</i><i style="width:10.724px">1</i><i style="width:10.724px">3</i><i style="width:6.128px">/</i><i style="width:10.724px">0</i><i style="width:10.724px">2</i><i style="width:6.128px">/</i><i style="width:10.724px">0</i><i style="width:10.724px">1</i></div>
<div class="c" style="left:933.20px;top:266.55px"><i style="width:10.724px">$</i><i style="width:10.724px">7</i><i style="width:10.724px">5</i><i style="width:6.128px">,</i><i style="width:10.724px">6</i><i style="width:10.724px">5</i><i style="width:10.724px">0</i></div>
<div class="c" style="left:46.80px;top:292.71px"><i style="width:10.724px">J</i><i style="width:10.724px">o</i><i style="width:10.724px">y</i><i style="width:10.724px">c</i><i style="width:10.724px">e</i></div>
<div class="c" style="left:153.55px;top:292.71px"><i style="width:15.320px">G</i><i style="width:10.724px">a</i><i style="width:10.724px">v</i><i style="width:4.596px">i</i><i style="width:10.724px">n</i></div>
<div class="c" style="left:301.10px;top:292.71px"><i style="width:15.320px">D</i><i style="width:10.724px">e</i><i style="width:10.724px">v</i><i style="width:10.724px">e</i><i style="width:4.596px">l</i><i style="width:10.724px">o</i><i style="width:10.724px">p</i><i style="width:10.724px">e</i><i style="width:6.128px">r</i></div>
<div class="c" style="left:565.75px;top:292.71px"><i style="width:13.788px">E</i><i style="width:10.724px">d</i><i style="width:4.596px">i</i><i style="width:10.724px">n</i><i style="width:10.724px">b</i><i style="width:10.724px">u</i><i style="width:6.128px">r</i><i style="width:10.724px">g</i><i style="width:10.724px">h</i></div>
<div class="c" style="left:770.00px;top:292.71px"><i style="width:10.724px">8</i><i style="width:10.724px">8</i><i style="width:10.724px">2</i><i style="width:10.724px">2</i></div>
<div class="c" style="left:817.70px;top:292.71px"><i style="width:10.724px">2</i><i style="width:10.724px">0</i><i style="width:10.724px">1</i><i style="width:10.724px">0</i><i style="width:6.128px">/</i><i style="width:10.724px">1</i><i style="width:10.724px">2</i><i style="width:6.128px">/</i><i style="width:10.724px">2</i><i style="width:10.724px">2</i></div>
<div class="c" style="left:933.20px;top:292.71px"><i style="width:10.724px">$</i><i style="width:10.724px">9</i><i style="width:10.724px">2</i><i style="width:6.128px">,</i><i style="width:10.724px">5</i><i style="width:10.724px">7</i><i style="width:10.724px">5</i></div>
<div class="c" style="left:46.80px;top:318.87px"><i style="width:13.788px">K</i><i style="width:10.724px">e</i><i style="width:4.596px">l</i><i style="width:4.596px">l</i><i style="width:10.724px">y</i></div>
<div class="c" style="left:153.55px;top:318.87px"><i style="width:15.320px">C</i><i style="width:10.724px">e</i><i style="width:10.724px">d</i><i style="width:6.128px">r</i><i style="width:4.596px">i</i><i style="width:10.724px">c</i></div>
<div class="c" style="left:301.10px;top:318.87px"><i style="width:13.788px">S</i><i style="width:10.724px">e</i><i style="width:10.724px">n</i><i style="width:4.596px">i</i><i style="width:10.724px">o</i><i style="width:6.128px">r</i><i style="width:6.128px">&nbsp;</i><i style="width:10.724px">J</i><i style="width:10.724px">a</i><i style="width:10.724px">v</i><i style="width:10.724px">a</i><i style="width:10.724px">s</i><i style="width:10.724px">c</i><i style="width:6.128px">r</i><i style="width:4.596px">i</i><i style="width:10.724px">p</i><i style="width:6.128px">t</i><i style="width:6.128px">&nbsp;</i><i style="width:15.320px">D</i><i style="width:10.724px">e</i><i style="width:10.724px">v</i><i style="width:10.724px">e</i><i style="width:4.596px">l</i><i style="width:10.724px">o</i><i style="width:10.724px">p</i><i style="width:10.724px">e</i><i style="width:6.128px">r</i></div>
<div class="c" style="left:565.75px;top:318.87px"><i style="width:13.788px">E</i><i style="width:10.724px">d</i><i style="width:4.596px">i</i><i style="width:10.724px">n</i><i style="width:10.724px">b</i><i style="width:10.724px">u</i><i style="width:6.128px">r</i><i style="width:10.724px">g</i><i style="width:10.724px">h</i></div>
<div class="c" style="left:770.00px;top:318.87px"><i style="width:10.724px">6</i><i style="width:10.724px">2</i><i style="width:10.724px">2</i><i style="width:10.724px">4</i></div>
<div class="c" style="left:817.70px;top:318.87px"><i style="width:10.724px">2</i><i style="width:10.724px">0</i><i style="width:10.724px">1</i><i style="width:10.724px">2</i><i style="width:6.128px">/</i><i style="width:10.724px">0</i><i style="width:10.724px">3</i><i style="width:6.128px">/</i><i style="width:10.724px">2</i><i style="width:10.724px">9</i></div>
<div class="c" style="left:933.20px;top:318.87px"><i style="width:10.724px">$</i><i style="width:10.724px">4</i><i style="width:10.724px">3</i><i style="width:10.724px">3</i><i style="width:6.128px">,</i><i style="width:10.724px">0</i><i style="width:10.724px">6</i><i style="width:10.724px">0</i></div>
<div class="c" style="left:46.80px;top:345.03px"><i style="width:13.788px">B</i><i style="width:10.724px">u</i><i style="width:6.128px">r</i><i style="width:10.724px">k</i><i style="width:10.724px">s</i></div>
<div class="c" style="left:153.55px;top:345.03px"><i style="width:13.788px">S</i><i style="width:10.724px">u</i><i style="width:10.724px">k</i><i style="width:4.596px">i</i></div>
<div class="c" style="left:301.10px;top:345.03px"><i style="width:15.320px">D</i><i style="width:10.724px">e</i><i style="width:10.724px">v</i><i style="width:10.724px">e</i><i style="width:4.596px">l</i><i style="width:10.724px">o</i><i style="width:10.724px">p</i><i style="width:10.724px">e</i><i style="width:6.128px">r</i></div>
<div class="c" style="left:565.75px;top:345.03px"><i style="width:10.724px">L</i><i style="width:10.724px">o</i><i style="width:10.724px">n</i><i style="width:10.724px">d</i><i style="width:10.724px">o</i><i style="width:10.724px">n</i></div>
<div class="c" style="left:770.00px;top:345.03px"><i style="width:10.724px">6</i><i style="width:10.724px">8</i><i style="width:10.724px">3</i><i style="width:10.724px">2</i></div>
<div class="c" style="left:817.70px;top:345.03px"><i style="width:10.724px">2</i><i style="width:10.724px">0</i><i style="width:10.724px">0</i><i style="width:10.724px">9</i><i style="width:6.128px">/</i><i style="width:10.724px">1</i><i style="width:10.724px">0</i><i style="width:6.128px">/</i><i style="width:10.724px">2</i><i style="width:10.724px">2</i></div>
<div class="c" style="left:933.20px;top:345.03px"><i style="width:10.724px">$</i><i style="width:10.724px">1</i><i style="width:10.724px">1</i><i style="width:10.724px">4</i><i style="width:6.128px">,</i><i style="width:10.724px">5</i><i style="width:10.724px">0</i><i style="width:10.724px">0</i></div>
<div class="c" style="left:46.80px;top:371.19px"><i style="width:15.320px">C</i><i style="width:10.724px">a</i><i style="width:4.596px">l</i><i style="width:10.724px">d</i><i style="width:15.320px">w</i><i style="width:10.724px">e</i><i style="width:4.596px">l</i><i style="width:4.596px">l</i></div>
<div class="c" style="left:153.55px;top:371.19px"><i style="width:10.724px">J</i><i style="width:10.724px">e</i><i style="width:10.724px">n</i><i style="width:10.724px">e</i><i style="width:6.128px">t</i><i style="width:6.128px">t</i><i style="width:10.724px">e</i></div>
<div class="c" style="left:301.10px;top:371.19px"><i style="width:15.320px">D</i><i style="width:10.724px">e</i><i style="width:10.724px">v</i><i style="width:10.724px">e</i><i style="width:4.596px">l</i><i style="width:10.724px">o</i><i style="width:10.724px">p</i><i style="width:16.852px">m</i><i style="width:10.724px">e</i><i style="width:10.724px">n</i><i style="width:6.128px">t</i><i style="width:6.128px">&nbsp;</i><i style="width:10.724px">L</i><i style="width:10.724px">e</i><i style="width:10.724px">a</i><i style="width:10.724px">d</i></div>
<div class="c" style="left:565.75px;top:371.19px"><i style="width:15.320px">N</i><i style="width:10.724px">e</i><i style="width:15.320px">w</i><i style="width:6.128px">&nbsp;</i><i style="width:13.788px">Y</i><i style="width:10.724px">o</i><i style="width:6.128px">r</i><i style="width:10.724px">k</i></div>
<div class="c" style="left:770.00px;top:371.19px"><i style="width:10.724px">1</i><i style="width:10.724px">9</i><i style="width:10.724px">3</i><i style="width:10.724px">7</i></div>
<div class="c" style="left:817.70px;top:371.19px"><i style="width:10.724px">2</i><i style="width:10.724px">0</i><i style="width:10.724px">1</i><i style="width:10.724px">1</i><i style="width:6.128px">/</i><i style="width:10.724px">0</i><i style="width:10.724px">9</i><i style="width:6.128px">/</i><i style="width:10.724px">0</i><i style="width:10.724px">3</i></div>
<div class="c" style="left:933.20px;top:371.19px"><i style="width:10.724px">$</i><i style="width:10.724px">3</i><i style="width:10.724px">4</i><i style="width:10.724px">5</i><i style="width:6.128px">,</i><i style="width:10.724px">0</i><i style="width:10.724px">0</i><i style="width:10.724px">0</i></div>
<div class="c" style="left:46.80px;top:397.35px"><i style="width:19.916px">W</i><i style="width:10.724px">a</i><i style="width:4.596px">l</i><i style="width:6.128px">t</i><i style="width:10.724px">o</i><i style="width:10.724px">n</i></div>
<div class="c" style="left:153.55px;top:397.35px"><i style="width:12.256px">T</i><i style="width:10.724px">h</i><i style="width:10.724px">o</i><i style="width:6.128px">r</i></div>
<div class="c" style="left:301.10px;top:397.35px"><i style="width:15.320px">D</i><i style="width:10.724px">e</i><i style="width:10.724px">v</i><i style="width:10.724px">e</i><i style="width:4.596px">l</i><i style="width:10.724px">o</i><i style="width:10.724px">p</i><i style="width:10.724px">e</i><i style="width:6.128px">r</i></div>
<div class="c" style="left:565.75px;top:397.35px"><i style="width:15.320px">N</i><i style="width:10.724px">e</i><i style="width:15.320px">w</i><i style="width:6.128px">&nbsp;</i><i style="width:13.788px">Y</i><i style="width:10.724px">o</i><i style="width:6.128px">r</i><i style="width:10.724px">k</i></div>
<div class="c" style="left:770.00px;top:397.35px"><i style="width:10.724px">8</i><i style="width:10.724px">3</i><i style="width:10.724px">2</i><i style="width:10.724px">7</i></div>
<div class="c" style="left:817.70px;top:397.35px"><i style="width:10.724px">2</i><i style="width:10.724px">0</i><i style="width:10.724px">1</i><i style="width:10.724px">3</i><i style="width:6.128px">/</i><i style="width:10.724px">0</i><i style="width:10.724px">8</i><i style="width:6.128px">/</i><i style="width:10.724px">1</i><i style="width:10.724px">1</i></div>
<div class="c" style="left:933.20px;top:397.35px"><i style="width:10.724px">$</i><i style="width:10.724px">9</i><i style="width:10.724px">8</i><i style="width:6.128px">,</i><i style="width:10.724px">5</i><i style="width:10.724px">4</i><i style="width:10.724px">0</i></div>
<div class="c" style="left:46.80px;top:423.51px"><i style="width:13.788px">A</i><i style="width:4.596px">l</i><i style="width:10.724px">e</i><i style="width:10.724px">x</i><i style="width:10.724px">a</i><i style="width:10.724px">n</i><i style="width:10.724px">d</i><i style="width:10.724px">e</i><i style="width:6.128px">r</i></div>
<div class="c" style="left:153.55px;top:423.51px"><i style="width:10.724px">J</i><i style="width:10.724px">o</i><i style="width:10.724px">n</i><i style="width:10.724px">a</i><i style="width:10.724px">s</i></div>
<div class="c" style="left:301.10px;top:423.51px"><i style="width:15.320px">D</i><i style="width:10.724px">e</i><i style="width:10.724px">v</i><i style="width:10.724px">e</i><i style="width:4.596px">l</i><i style="width:10.724px">o</i><i style="width:10.724px">p</i><i style="width:10.724px">e</i><i style="width:6.128px">r</i></div>
<div class="c" style="left:565.75px;top:423.51px"><i style="width:13.788px">S</i><i style="width:10.724px">a</i><i style="width:10.724px">n</i><i style="width:6.128px">&nbsp;</i><i style="width:12.256px">F</i><i style="width:6.128px">r</i><i style="width:10.724px">a</i><i style="width:10.724px">n</i><i style="width:10.724px">c</i><i style="width:4.596px">i</i><i style="width:10.724px">s</i><i style="width:10.724px">c</i><i style="width:10.724px">o</i></div>
<div class="c" style="left:770.00px;top:423.51px"><i style="width:10.724px">8</i><i style="width:10.724px">1</i><i style="width:10.724px">9</i><i style="width:10.724px">6</i></div>
<div class="c" style="left:817.70px;top:423.51px"><i style="width:10.724px">2</i><i style="width:10.724px">0</i><i style="width:10.724px">1</i><i style="width:10.724px">0</i><i style="width:6.128px">/</i><i style="width:10.724px">0</i><i style="width:10.724px">7</i><i style="width:6.128px">/</i><i style="width:10.724px">1</i><i style="width:10.724px">4</i></div>
<div class="c" style="left:933.20px;top:423.51px"><i style="width:10.724px">$</i><i style="width:10.724px">8</i><i style="width:10.724px">6</i><i style="width:6.128px">,</i><i style="width:10.724px">5</i><i style="width:10.724px">0</i><i style="width:10.724px">0</i></div>
<div class="c" style="left:46.80px;top:449.67px"><i style="width:15.320px">H</i><i style="width:10.724px">u</i><i style="width:6.128px">r</i><i style="width:10.724px">s</i><i style="width:6.128px">t</i></div>
<div class="c" style="left:153.55px;top:449.67px"><i style="width:15.320px">C</i><i style="width:10.724px">o</i><i style="width:4.596px">l</i><i style="width:4.596px">l</i><i style="width:10.724px">e</i><i style="width:10.724px">e</i><i style="width:10.724px">n</i></div>
<div class="c" style="left:301.10px;top:449.67px"><i style="width:10.724px">J</i><i style="width:10.724px">a</i><i style="width:10.724px">v</i><i style="width:10.724px">a</i><i style="width:10.724px">s</i><i style="width:10.724px">c</i><i style="width:6.128px">r</i><i style="width:4.596px">i</i><i style="width:10.724px">p</i><i style="width:6.128px">t</i><i style="width:6.128px">&nbsp;</i><i style="width:15.320px">D</i><i style="width:10.724px">e</i><i style="width:10.724px">v</i><i style="width:10.724px">e</i><i style="width:4.596px">l</i><i style="width:10.724px">o</i><i style="width:10.724px">p</i><i style="width:10.724px">e</i><i style="width:6.128px">r</i></div>
<div class="c" style="left:565.75px;top:449.67px"><i style="width:13.788px">S</i><i style="width:10.724px">a</i><i style="width:10.724px">n</i><i style="width:6.128px">&nbsp;</i><i style="width:12.256px">F</i><i style="width:6.128px">r</i><i style="width:10.724px">a</i><i style="width:10.724px">n</i><i style="width:10.724px">c</i><i style="width:4.596px">i</i><i style="width:10.724px">s</i><i style="width:10.724px">c</i><i style="width:10.724px">o</i></div>
<div class="c" style="left:770.00px;top:449.67px"><i style="width:10.724px">2</i><i style="width:10.724px">3</i><i style="width:10.724px">6</i><i style="width:10.724px">0</i></div>
<div class="c" style="left:817.70px;top:449.67px"><i style="width:10.724px">2</i><i style="width:10.724px">0</i><i style="width:10.724px">0</i><i style="width:10.724px">9</i><i style="width:6.128px">/</i><i style="width:10.724px">0</i><i style="width:10.724px">9</i><i style="width:6.128px">/</i><i style="width:10.724px">1</i><i style="width:10.724px">5</i></div>
<div class="c" style="left:933.20px;top:449.67px"><i style="width:10.724px">$</i><i style="width:10.724px">2</i><i style="width:10.724px">0</i><i style="width:10.724px">5</i><i style="width:6.128px">,</i><i style="width:10.724px">5</i><i style="width:10.724px">0</i><i style="width:10.724px">0</i></div>
<div class="c" style="left:46.80px;top:475.83px"><i style="width:13.788px">B</i><i style="width:6.128px">r</i><i style="width:10.724px">u</i><i style="width:10.724px">c</i><i style="width:10.724px">e</i></div>
<div class="c" style="left:153.55px;top:475.83px"><i style="width:16.852px">M</i><i style="width:4.596px">i</i><i style="width:10.724px">c</i><i style="width:10.724px">h</i><i style="width:10.724px">a</i><i style="width:10.724px">e</i><i style="width:4.596px">l</i></div>
<div class="c" style="left:301.10px;top:475.83px"><i style="width:10.724px">J</i><i style="width:10.724px">a</i><i style="width:10.724px">v</i><i style="width:10.724px">a</i><i style="width:10.724px">s</i><i style="width:10.724px">c</i><i style="width:6.128px">r</i><i style="width:4.596px">i</i><i style="width:10.724px">p</i><i style="width:6.128px">t</i><i style="width:6.128px">&nbsp;</i><i style="width:15.320px">D</i><i style="width:10.724px">e</i><i style="width:10.724px">v</i><i style="width:10.724px">e</i><i style="width:4.596px">l</i><i style="width:10.724px">o</i><i style="width:10.724px">p</i><i style="width:10.724px">e</i><i style="width:6.128px">r</i></div>
<div class="c" style="left:565.75px;top:475.83px"><i style="width:13.788px">S</i><i style="width:4.596px">i</i><i style="width:10.724px">n</i><i style="width:10.724px">g</i><i style="width:10.724px">a</i><i style="width:10.724px">p</i><i style="width:10.724px">o</i><i style="width:6.128px">r</i><i style="width:10.724px">e</i></div>
<div class="c" style="left:770.00px;top:475.83px"><i style="width:10.724px">5</i><i style="width:10.724px">3</i><i style="width:10.724px">8</i><i style="width:10.724px">4</i></div>
<div class="c" style="left:817.70px;top:475.83px"><i style="width:10.724px">2</i><i style="width:10.724px">0</i><i style="width:10.724px">1</i><i style="width:10.724px">1</i><i style="width:6.128px">/</i><i style="width:10.724px">0</i><i style="width:10.724px">6</i><i style="width:6.128px">/</i><i style="width:10.724px">2</i><i style="width:10.724px">7</i></div>
<div class="c" style="left:933.20px;top:475.83px"><i style="width:10.724px">$</i><i style="width:10.724px">1</i><i style="width:10.724px">8</i><i style="width:10.724px">3</i><i style="width:6.128px">,</i><i style="width:10.724px">0</i><i style="width:10.724px">0</i><i style="width:10.724px">0</i></div>
<svg class="abs" style="left:0;top:0" width="1037" height="547"><g fill="#000"><rect x="46.3" y="240.2" width="104.9" height="1.9"/><rect x="46.3" y="240.2" width="1.9" height="25.2"/><rect x="149" y="240.2" width="2.6" height="25.2"/><rect x="46.3" y="262.9" width="105" height="2.6"/><rect x="147.5" y="261.9" width="6.9" height="6.5"/></g></svg>
<!--/GRID-->
</body></html>
